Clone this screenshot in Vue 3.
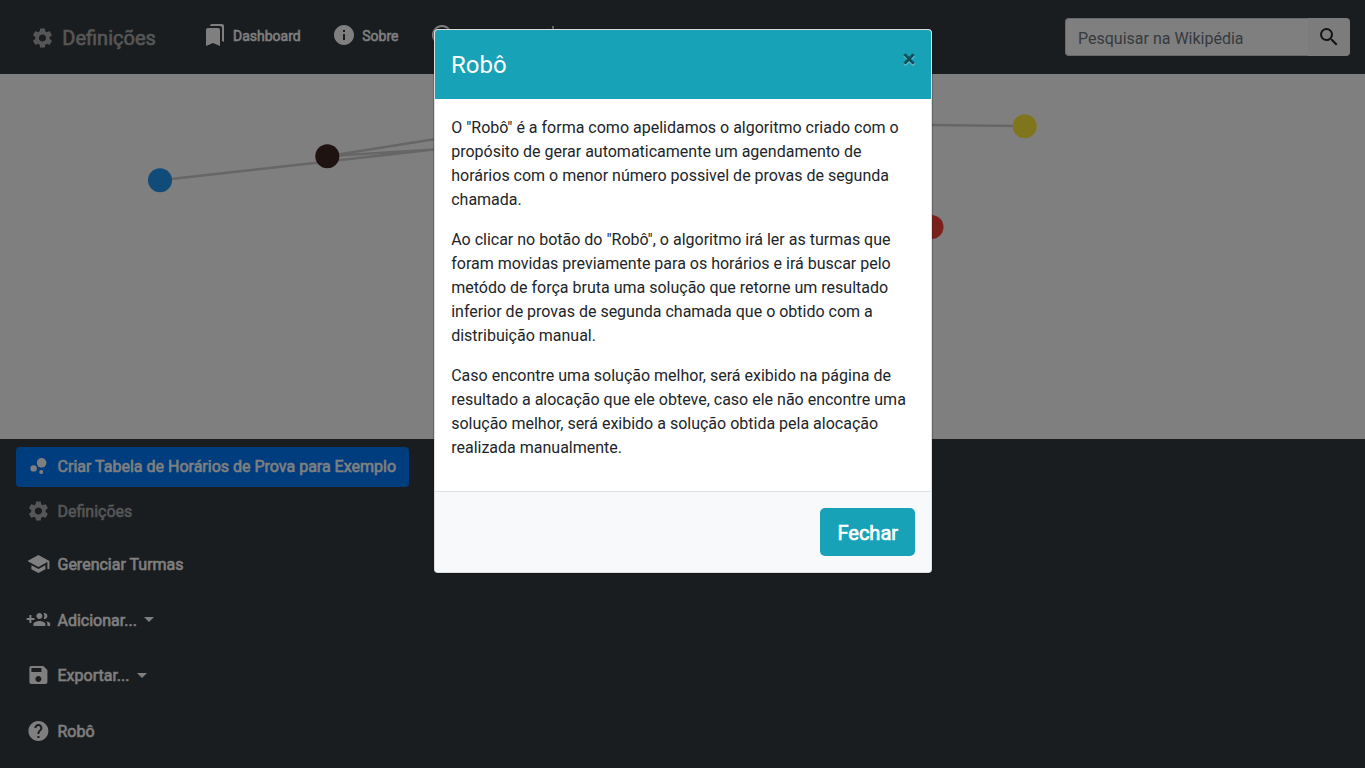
<script setup>
const icons = {
  gear: 'M19.14 12.94c.04-.3.06-.61.06-.94 0-.32-.02-.64-.07-.94l2.03-1.58c.18-.14.23-.41.12-.61l-1.92-3.32c-.12-.22-.37-.29-.59-.22l-2.39.96c-.5-.38-1.03-.7-1.62-.94l-.36-2.54c-.04-.24-.24-.41-.48-.41h-3.84c-.24 0-.43.17-.47.41l-.36 2.54c-.59.24-1.13.57-1.62.94l-2.39-.96c-.22-.08-.47 0-.59.22L2.74 8.87c-.12.21-.08.47.12.61l2.03 1.58c-.05.3-.09.63-.09.94s.02.64.07.94l-2.03 1.58c-.18.14-.23.41-.12.61l1.92 3.32c.12.22.37.29.59.22l2.39-.96c.5.38 1.03.7 1.62.94l.36 2.54c.05.24.24.41.48.41h3.84c.24 0 .44-.17.47-.41l.36-2.54c.59-.24 1.13-.56 1.62-.94l2.39.96c.22.08.47 0 .59-.22l1.92-3.32c.12-.22.07-.47-.12-.61l-2.01-1.58zM12 15.6c-1.98 0-3.6-1.62-3.6-3.6s1.62-3.6 3.6-3.6 3.6 1.62 3.6 3.6-1.62 3.6-3.6 3.6z',
  bookmarks: 'M19 18l2 1V3c0-1.100-.9-2-2-2H8.990C7.890 1 7 1.900 7 3h10c1.100 0 2 .9 2 2v13zM15 5H5c-1.100 0-2 .9-2 2v16l7-3 7 3V7c0-1.100-.9-2-2-2z',
  info: 'M12 2C6.480 2 2 6.480 2 12s4.480 10 10 10 10-4.480 10-10S17.520 2 12 2zm1 15h-2v-6h2v6zm0-8h-2V7h2v2z',
  ring: 'M12 2C6.480 2 2 6.480 2 12s4.480 10 10 10 10-4.480 10-10S17.520 2 12 2zm0 18c-4.410 0-8-3.590-8-8s3.590-8 8-8 8 3.590 8 8-3.590 8-8 8z',
  search: 'M15.500 14h-.79l-.28-.27A6.471 6.471 0 0 0 16 9.500 6.500 6.500 0 1 0 9.500 16c1.610 0 3.090-.59 4.230-1.570l.27.28v.79l5 4.990L20.490 19l-4.990-5zm-6 0C7.010 14 5 11.990 5 9.500S7.010 5 9.500 5 14 7.010 14 9.500 11.990 14 9.500 14z',
  school: 'M5 13.180v4L12 21l7-3.820v-4L12 17l-7-3.820zM12 3L1 9l11 6 9-4.910V17h2V9L12 3z',
  group: 'M8 10H5V7H3v3H0v2h3v3h2v-3h3v-2zm10 1c1.660 0 2.990-1.340 2.990-3S19.660 5 18 5c-.32 0-.63.05-.91.140.57.81.9 1.790.9 2.860s-.34 2.040-.9 2.860c.28.09.59.140.91.140zm-5 0c1.660 0 2.990-1.340 2.990-3S14.660 5 13 5c-1.660 0-3 1.340-3 3s1.340 3 3 3zm6.620 2.160c.83.73 1.380 1.660 1.380 2.840v2h3v-2c0-1.540-2.370-2.490-4.380-2.840zM13 13c-2 0-6 1-6 3v2h12v-2c0-2-4-3-6-3z',
  save: 'M17 3H5c-1.110 0-2 .9-2 2v14c0 1.100.89 2 2 2h14c1.100 0 2-.9 2-2V7l-4-4zm-5 16c-1.660 0-3-1.340-3-3s1.340-3 3-3 3 1.340 3 3-1.340 3-3 3zm3-10H5V5h10v4z',
  help: 'M12 2C6.480 2 2 6.480 2 12s4.480 10 10 10 10-4.480 10-10S17.520 2 12 2zm1 17h-2v-2h2v2zm2.070-7.750l-.9.920C13.450 12.900 13 13.500 13 15h-2v-.5c0-1.100.45-2.100 1.170-2.830l1.240-1.260c.37-.36.59-.86.59-1.410 0-1.100-.9-2-2-2s-2 .9-2 2H8c0-2.210 1.790-4 4-4s4 1.790 4 4c0 .88-.36 1.680-.93 2.250z',
}
const menu = [
  { icon: 'gear', label: 'Definições', cls: 'defs' },
  { icon: 'school', label: 'Gerenciar Turmas' },
  { icon: 'group', label: 'Adicionar...', caret: true, cls: 'add' },
  { icon: 'save', label: 'Exportar...', caret: true },
  { icon: 'help', label: 'Robô' },
]
</script>

<template>
  <div class="page">
    <header class="navbar">
      <a class="brand"><svg class="ic" viewBox="0 0 24 24"><path :d="icons.gear" /></svg><span>Definições</span></a>
      <nav class="links">
        <a class="link"><svg class="ic" viewBox="0 0 24 24"><path :d="icons.bookmarks" /></svg><span>Dashboard</span></a>
        <a class="link"><svg class="ic" viewBox="0 0 24 24"><path :d="icons.info" /></svg><span>Sobre</span></a>
        <a class="link">
          <svg class="ic" viewBox="0 0 24 24"><path :d="icons.ring" /></svg>
          <svg class="rays" width="14" height="6" viewBox="0 0 14 6"><path d="M7 0v5" /><path class="faint" d="M1.500 2.500l1.500 2M12 2.500l-1.500 2" /></svg>
        </a>
      </nav>
      <div class="search">
        <div class="field">Pesquisar na Wikipédia</div>
        <div class="go"><svg class="ic" viewBox="0 0 24 24"><path :d="icons.search" /></svg></div>
      </div>
    </header>

    <svg class="graph" width="1365" height="365" viewBox="0 74 1365 365">
      <g stroke="#ccc" stroke-width="2.500">
        <path d="M160 180.200L434 149.500M327 156.200L434 139.300M327 156.200L434 149.500M930 125L1025 126.200" />
      </g>
      <circle cx="160" cy="180.200" r="12" fill="#2196f3" />
      <circle cx="327.300" cy="156.200" r="12" fill="#3e2723" />
      <circle cx="1024.700" cy="126.200" r="12" fill="#ffeb3b" />
      <circle cx="931.500" cy="227" r="12" fill="#f44336" />
    </svg>

    <aside class="menu">
      <button class="example">
        <svg class="ic" viewBox="0 0 24 24"><circle cx="7.200" cy="14.400" r="3.200" /><circle cx="14.800" cy="18" r="2" /><circle cx="15.200" cy="8.800" r="4.800" /></svg>
        <span>Criar Tabela de Horários de Prova para Exemplo</span>
      </button>
      <a v-for="m in menu" :key="m.label" class="item" :class="m.cls">
        <svg class="ic" viewBox="0 0 24 24"><path :d="icons[m.icon]" /></svg>
        <span>{{ m.label }}</span>
        <i v-if="m.caret" class="caret"></i>
      </a>
    </aside>

    <div class="backdrop">
      <section class="modal">
        <div class="card">
          <div class="head"><h5>Robô</h5><span class="close">×</span></div>
          <div class="body">
            <p>O "Robô" é a forma como apelidamos o algoritmo criado com o propósito de gerar automaticamente um agendamento de horários com o menor número possivel de provas de segunda chamada.</p>
            <p>Ao clicar no botão do "Robô", o algoritmo irá ler as turmas que foram movidas previamente para os horários e irá buscar pelo metódo de força bruta uma solução que retorne um resultado inferior de provas de segunda chamada que o obtido com a distribuição manual.</p>
            <p>Caso encontre uma solução melhor, será exibido na página de resultado a alocação que ele obteve, caso ele não encontre uma solução melhor, será exibido a solução obtida pela alocação realizada manualmente.</p>
          </div>
          <div class="foot"><button class="done">Fechar</button></div>
        </div>
      </section>
    </div>
  </div>
</template>

<style>
body { margin: 0; overflow: hidden; }
</style>

<style scoped>
* { box-sizing: border-box; }
.page { position: relative; width: 1365px; height: 768px; overflow: hidden; background: #343a40; font: 400 16px/24px Roboto, sans-serif; color: #fff; }
.ic { width: 24px; height: 24px; fill: currentColor; flex: none; display: block; }
.navbar { display: flex; height: 74px; align-items: flex-start; padding: 0 15px 0 30px; background: #343a40; }
.brand { display: flex; gap: 8.300px; width: 173px; padding-top: 26px; font-size: 20px; color: #adadad; -webkit-text-stroke: .6px currentColor; }
.brand .ic { transform: translateX(.45px); }
.links { display: flex; flex: 1; gap: 31.500px; padding-top: 23px; }
.link { display: flex; gap: 6px; font-size: 14px; line-height: 26px; -webkit-text-stroke: .5px currentColor; }
.rays { margin: 3px 0 0 86px; fill: none; stroke: #fff; stroke-width: 1.500; }
.faint { opacity: .45; stroke-width: 1.200; }
.search { display: flex; width: 285px; height: 38px; margin-top: 18px; }
.field { flex: 1; padding: 7px 12px; line-height: 25px; border: 1px solid #ced4da; border-right: 0; border-radius: 4px 0 0 4px; background: #fff; color: #6c757d; }
.go { width: 42px; padding: 7px 9px; border-radius: 0 4px 4px 0; background: #f8f9fa; color: #212529; }
.graph { display: block; background: #fff; }
.menu { display: flex; flex-direction: column; align-items: flex-start; padding: 8px 16px; font-size: 16px; -webkit-text-stroke: .55px currentColor; }
.example { display: flex; align-items: center; gap: 7.300px; width: 393px; height: 40px; padding: 0 10.300px; border: 0; border-radius: 4px; background: #007bff; color: #fff; font: inherit; white-space: nowrap; -webkit-text-stroke: .55px currentColor; }
.example .ic { margin-bottom: 2px; transform: translateX(.4px); }
.item { display: flex; align-items: center; gap: 7.200px; height: 24px; margin: 0 0 31.600px 10.300px; }
.item .ic { margin-bottom: 1px; transform: translateX(.4px); }
.defs { margin-top: 12.500px; margin-bottom: 29.300px; color: #adadad; }
.add span { margin-top: 1px; }
.caret { margin-left: .2px; margin-bottom: 1px; border: 5px solid transparent; border-top-color: #fff; border-bottom: 0; }
.backdrop { position: absolute; inset: 0; background: rgba(0, 0, 0, .5); display: flex; justify-content: center; align-items: flex-start; padding-top: 28px; }
.modal { width: 500px; border: 1px solid rgba(0, 0, 0, .2); border-radius: 5px; background: #fff; background-clip: padding-box; color: #212529; }
.card { border: 1px solid rgba(0, 0, 0, .125); border-radius: 4px; overflow: hidden; }
.head { display: flex; justify-content: space-between; height: 69px; padding: 16px 15px 16px 16.500px; background: #17a2b8; }
.head h5 { margin: 0; font-size: 24px; line-height: 38px; font-weight: 400; color: #fff; }
.close { margin-top: 1px; font-size: 24px; font-weight: 700; line-height: 24px; color: #000; opacity: .5; text-shadow: 0 1px 0 #fff; }
.body { padding: 17px 15.500px 31px 16.700px; }
.body p { margin: 0 0 16px; }
.body p:last-child { margin-bottom: 0; }
.foot { display: flex; justify-content: flex-end; padding: 16px; border-top: 1px solid #dee2e6; background: #f8f9fa; }
.done { width: 95px; height: 48px; padding: 2px 0 0 1.500px; border: 0; border-radius: 5px; background: #17a2b8; color: #fff; text-align: center; font: 400 20px/30px Roboto, sans-serif; -webkit-text-stroke: .7px currentColor; }
</style>
